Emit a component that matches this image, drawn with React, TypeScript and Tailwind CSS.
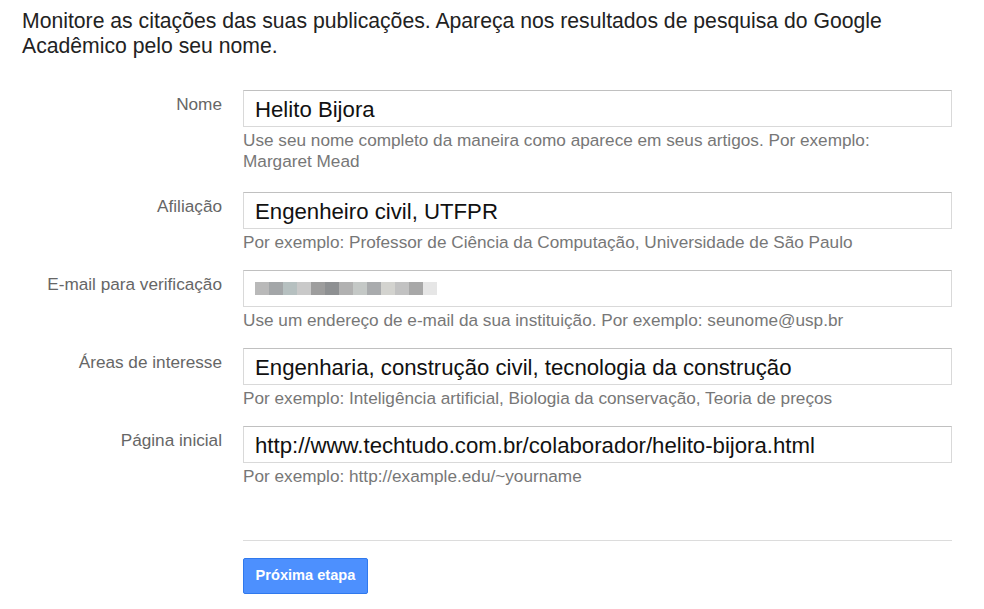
const FIELDS = [
  {
    label: 'Nome',
    value: 'Helito Bijora',
    hint: ['Use seu nome completo da maneira como aparece em seus artigos. Por exemplo:', 'Margaret Mead'],
  },
  {
    label: 'Afiliação',
    value: 'Engenheiro civil, UTFPR',
    hint: ['Por exemplo: Professor de Ciência da Computação, Universidade de São Paulo'],
  },
  {
    label: 'E-mail para verificação',
    value: null,
    hint: ['Use um endereço de e-mail da sua instituição. Por exemplo: seunome@usp.br'],
  },
  {
    label: 'Áreas de interesse',
    value: 'Engenharia, construção civil, tecnologia da construção',
    hint: ['Por exemplo: Inteligência artificial, Biologia da conservação, Teoria de preços'],
  },
  {
    label: 'Página inicial',
    value: 'http://www.techtudo.com.br/colaborador/helito-bijora.html',
    hint: ['Por exemplo: http://example.edu/~yourname'],
  },
]

// pixelated e-mail, as in the screenshot
const BLUR = ['#b9b9b9', '#a3a6a8', '#b6c0c0', '#c9c9c9', '#9d9d9d', '#8e9092', '#b1b1b1', '#c4c8c6', '#a9abad', '#d3d3cf', '#c2c2c2', '#a8a8a8', '#e6e6e6']

function BlurredEmail() {
  return (
    <div className="flex items-center h-full pl-[11px] blur-[0.6px]">
      {BLUR.map((c, i) => (
        <div key={i} className="h-[13px] w-[14px]" style={{ background: c }} />
      ))}
    </div>
  )
}

export default function App() {
  return (
    <div className="bg-white w-[984px] h-[609px] overflow-hidden text-[#222] font-['Liberation_Sans',Arial,sans-serif]">
      <p className="pl-[22px] pt-[8px] text-[21.2px] leading-[25px] text-[#222] whitespace-nowrap">
        Monitore as citações das suas publicações. Apareça nos resultados de pesquisa do Google
        <br />
        Acadêmico pelo seu nome.
      </p>

      <div className="mt-[32px]">
        {FIELDS.map((f, idx) => (
          <div key={f.label} className={`flex ${idx === 0 ? 'mb-[20px]' : 'mb-[17px]'}`}>
            <div className="w-[222px] shrink-0 text-right pt-[4px] text-[17.2px] leading-[20px] text-[#666] whitespace-nowrap">
              {f.label}
            </div>
            <div className="ml-[21px] w-[709px]">
              <div className="h-[37px] border border-[#d9d9d9] border-t-[#c0c0c0] bg-white">
                {f.value ? (
                  <div className="pl-[11px] pt-[6px] text-[22.2px] leading-[26px] text-[#111] whitespace-nowrap">
                    {f.value}
                  </div>
                ) : (
                  <BlurredEmail />
                )}
              </div>
              <div className="mt-[3px] text-[17.2px] leading-[21px] text-[#777] whitespace-nowrap">
                {f.hint.map((h) => (
                  <div key={h}>{h}</div>
                ))}
              </div>
            </div>
          </div>
        ))}
      </div>

      <div className="ml-[243px] w-[709px] mt-[53px] border-t border-[#dcdcdc]" />

      <div className="ml-[243px] mt-[17px]">
        <button className="h-[36px] w-[125px] rounded-[2px] border border-[#3079ed] bg-[#4d90fe] text-white text-[14.6px] font-bold">
          Próxima etapa
        </button>
      </div>
    </div>
  )
}
